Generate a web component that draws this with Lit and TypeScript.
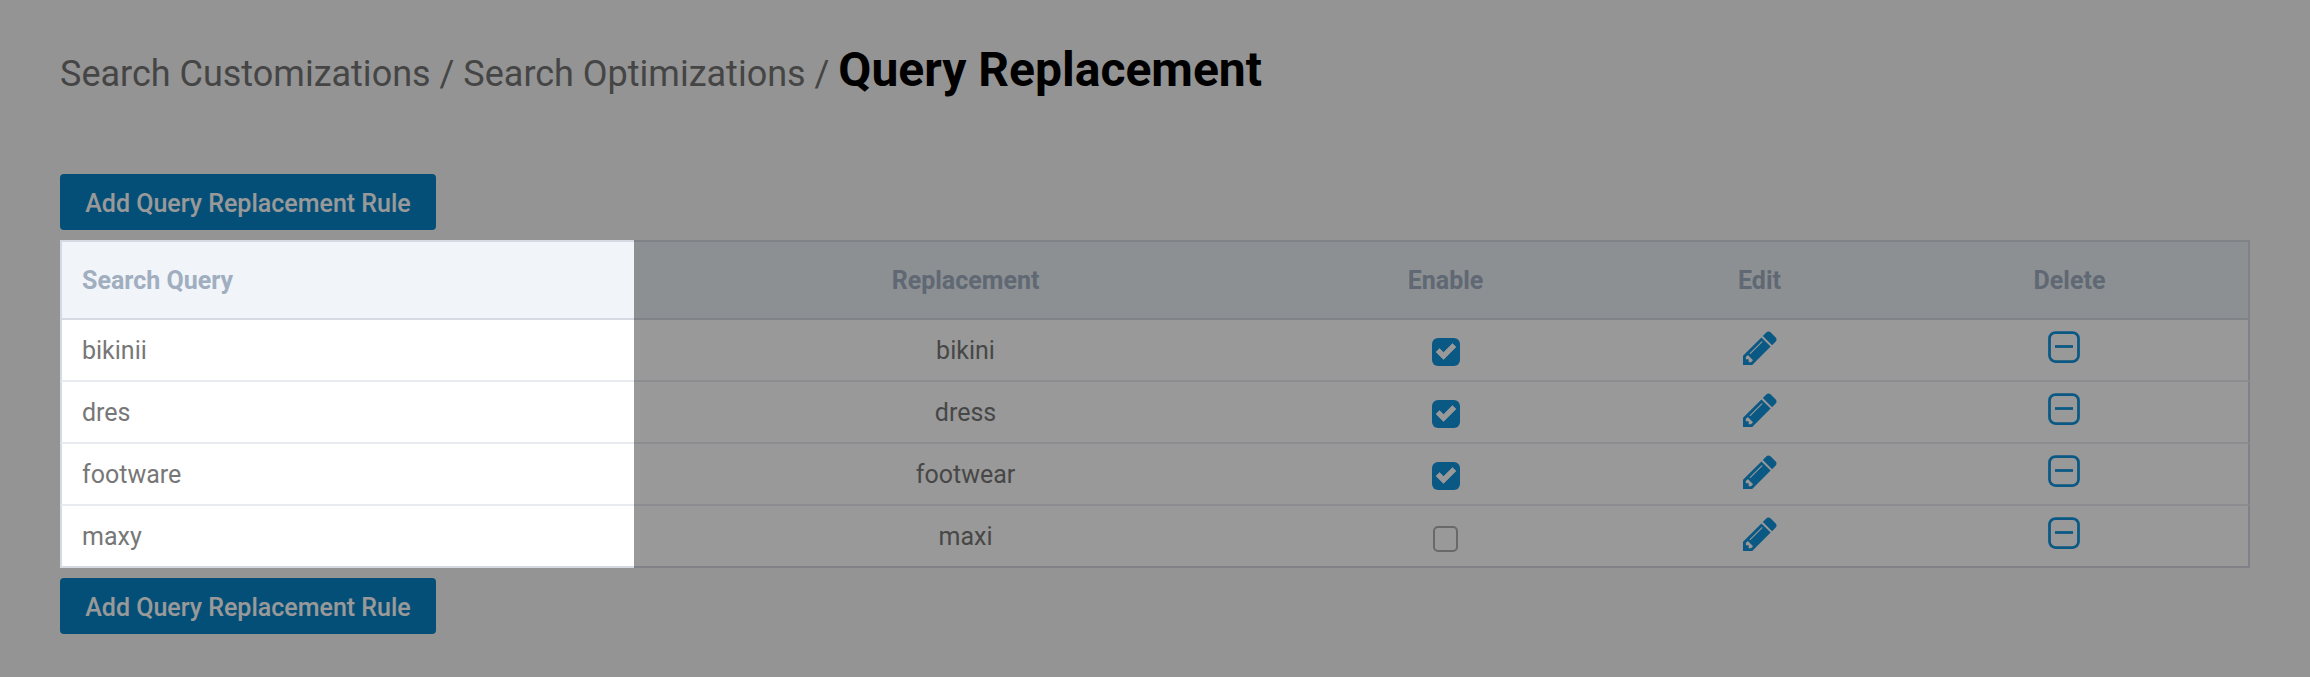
import { LitElement, html, css, svg } from 'lit';
import { customElement } from 'lit/decorators.js';

interface Rule {
    query: string;
    replacement: string;
    enabled: boolean;
}

const RULES: Rule[] = [
    { query: 'bikinii', replacement: 'bikini', enabled: true },
    { query: 'dres', replacement: 'dress', enabled: true },
    { query: 'footware', replacement: 'footwear', enabled: true },
    { query: 'maxy', replacement: 'maxi', enabled: false },
];

const pencil = svg`<path d="M491 1536l91-91-235-235-91 91v107h128v128h107zm523-928q0-22-22-22-10 0-17 7l-542 542q-7 7-7 17 0 22 22 22 10 0 17-7l542-542q7-7 7-17zm-54-192l416 416-832 832h-416v-416zm683 96q0 53-37 90l-166 166-416-416 166-165q36-38 90-38 53 0 91 38l235 234q37 39 37 91z"/>`;

@customElement('app-root')
export class AppRoot extends LitElement {
    public static override styles = css`
        :host {
            display: block;
            position: relative;
            min-height: 677px;
            box-sizing: border-box;
            padding: 46px 60px 0;
            background: #f7f7f7;
            font-family: Roboto, "Liberation Sans", sans-serif;
            color: #737373;
        }

        .overlay {
            position: absolute;
            inset: 0;
            background: rgba(0, 0, 0, 0.4);
            z-index: 1;
        }

        h1 {
            margin: 0 0 76px;
            font-size: 36px;
            line-height: 48px;
            font-weight: 400;
            white-space: nowrap;
        }

        h1 strong {
            font-size: 48px;
            line-height: 48px;
            font-weight: 700;
            color: #000;
        }

        .add {
            display: block;
            width: 376px;
            height: 56px;
            padding: 2px 0 0;
            border: none;
            border-radius: 4px;
            background: #0884c8;
            color: #fff;
            font: 500 25px Roboto, sans-serif;
        }

        table {
            width: 2190px;
            margin: 10px 0;
            table-layout: fixed;
            border-collapse: separate;
            border-spacing: 0;
        }

        th, td {
            padding: 0;
            text-align: center;
            box-sizing: border-box;
        }

        th {
            height: 80px;
            background: #e9f0f5;
            color: #a0aec0;
            font-size: 25px;
            font-weight: 700;
            border-top: 2px solid #d5d9e1;
            border-bottom: 2px solid #d5d9e1;
        }

        th.first {
            background: #f1f4f9;
        }

        td {
            height: 62px;
            background: #fff;
            font-size: 25px;
            color: #777;
            border-bottom: 2px solid #e8ecf1;
        }

        tr:last-child td {
            border-bottom-color: #d5d9e1;
        }

        th:last-child, td:last-child {
            border-right: 2px solid #d5d9e1;
            padding-right: 34px;
        }

        td:last-child svg {
            margin-right: 12px;
        }

        .first {
            position: relative;
            z-index: 2;
            padding-left: 20px;
            text-align: left;
            border-left: 2px solid #d5d9e1;
        }

        .icon-cell {
            vertical-align: top;
            padding-top: 11px;
            line-height: 0;
        }

        .check-cell {
            vertical-align: top;
            padding-top: 18px;
            line-height: 0;
        }

        .check {
            display: inline-block;
            width: 28px;
            height: 28px;
            border-radius: 6px;
            background: #1294dc;
        }

        .check svg {
            display: block;
            fill: #fff;
            stroke: #fff;
            stroke-width: 0.6;
            stroke-linejoin: round;
        }

        .check.off {
            box-sizing: border-box;
            width: 25px;
            height: 26px;
            margin-top: 2px;
            background: transparent;
            border: 2px solid #b0b0b0;
            border-radius: 5px;
        }

        .pencil {
            fill: #1294dc;
        }

        .minus {
            fill: none;
            stroke: #1294dc;
            stroke-width: 2.75;
        }
    `;

    private _renderAdd() {
        return html`<button class="add">Add Query Replacement Rule</button>`;
    }

    private _renderRow(rule: Rule) {
        return html`
            <tr>
                <td class="first">${rule.query}</td>
                <td>${rule.replacement}</td>
                <td class="check-cell">
                    ${rule.enabled
                        ? html`<span class="check"><svg width="28" height="28" viewBox="0 0 28 28"><path d="M4 14l3.5-3.5 4 4 9-9 3.5 3.5-12.5 12.5z"/></svg></span>`
                        : html`<span class="check off"></span>`}
                </td>
                <td class="icon-cell">
                    <svg class="pencil" width="34" height="34" viewBox="128 128 1536 1536">${pencil}</svg>
                </td>
                <td class="icon-cell">
                    <svg class="minus" width="32" height="32" viewBox="0 0 32 32">
                        <rect x="1.5" y="1.5" width="29" height="29" rx="6"></rect>
                        <path d="M7 15.5h18"></path>
                    </svg>
                </td>
            </tr>
        `;
    }

    override render() {
        return html`
            <h1>Search Customizations / Search Optimizations / <strong>Query Replacement</strong></h1>
            ${this._renderAdd()}
            <table>
                <colgroup>
                    <col style="width: 574px" />
                    <col style="width: 663px" />
                    <col style="width: 297px" />
                    <col style="width: 331px" />
                    <col />
                </colgroup>
                <thead>
                    <tr>
                        <th class="first">Search Query</th>
                        <th>Replacement</th>
                        <th>Enable</th>
                        <th>Edit</th>
                        <th>Delete</th>
                    </tr>
                </thead>
                <tbody>
                    ${RULES.map((rule) => this._renderRow(rule))}
                </tbody>
            </table>
            ${this._renderAdd()}
            <div class="overlay"></div>
        `;
    }
}
